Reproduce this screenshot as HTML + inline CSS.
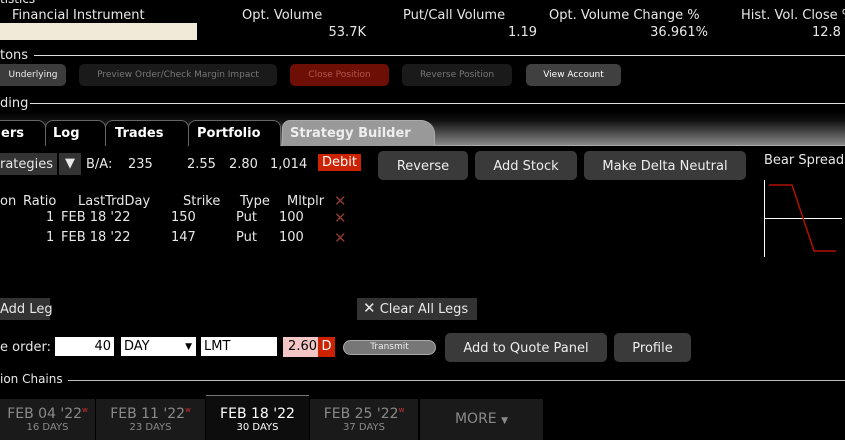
<!DOCTYPE html>
<html><head><meta charset="utf-8"><style>
*{margin:0;padding:0;box-sizing:border-box}
body{width:845px;height:440px;background:#000;color:#e8e8e8;font-family:"DejaVu Sans","Liberation Sans",sans-serif;font-size:13px;position:relative;overflow:hidden}
.a{position:absolute;white-space:nowrap}
.r{text-align:right}
.btn{position:absolute;border-radius:5px;display:flex;align-items:center;justify-content:center;font-size:9px;white-space:nowrap}
.b2{position:absolute;border-radius:5px;background:#3a3a3a;display:flex;align-items:center;justify-content:center;font-size:13px;color:#eee;white-space:nowrap}
.line{position:absolute;height:1px;background:#ddd}
.tab{position:absolute;top:120px;height:26px;background:#000;border:1px solid #666;border-bottom:none;border-radius:8px 8px 0 0;font-weight:bold;font-size:13px;color:#fff;padding:5px 0 0 12px}
.dt{position:absolute;top:399px;height:41px;background:#1a1a1a;text-align:center;color:#8a8a8a}
.dt .t{font-size:14px;margin-top:7px}
.dt .s{font-size:10px;margin-top:0px}
.w{color:#c33;font-size:7px;vertical-align:top}
.x{color:#8a3a30;font-weight:bold;font-size:15px;line-height:15px}
</style></head><body>
<div class="a" style="left:0;top:-8px;font-size:12px">tistics</div>
<div class="a" style="left:12px;top:8px">Financial Instrument</div>
<div class="a" style="left:242px;top:8px">Opt. Volume</div>
<div class="a" style="left:403px;top:8px">Put/Call Volume</div>
<div class="a" style="left:549px;top:8px">Opt. Volume Change %</div>
<div class="a" style="left:741px;top:8px">Hist. Vol. Close %</div>
<div class="a" style="left:0;top:23px;width:197px;height:17px;background:#efebd8"></div>
<div class="a r" style="left:266px;width:100px;top:25px">53.7K</div>
<div class="a r" style="left:437px;width:100px;top:25px">1.19</div>
<div class="a r" style="left:608px;width:100px;top:25px">36.961%</div>
<div class="a" style="left:812px;top:25px">12.8</div>

<div class="a" style="left:0;top:48px">tons</div>
<div class="line" style="left:34px;right:0;top:55px"></div>
<div class="btn" style="left:0;top:64px;width:66px;height:22px;background:#3c3c3c;color:#eee;border-radius:0 5px 5px 0">Underlying</div>
<div class="btn" style="left:79px;top:64px;width:198px;height:22px;background:#1a1a1a;color:#777">Preview Order/Check Margin Impact</div>
<div class="btn" style="left:290px;top:64px;width:99px;height:22px;background:#6e0f05;color:#b0554a">Close Position</div>
<div class="btn" style="left:402px;top:64px;width:110px;height:22px;background:#1a1a1a;color:#777">Reverse Position</div>
<div class="btn" style="left:526px;top:64px;width:95px;height:22px;background:#404040;color:#fff">View Account</div>

<div class="a" style="left:0;top:96px">ding</div>
<div class="line" style="left:30px;right:0;top:103px"></div>
<div class="a" style="left:0;top:112px;width:845px;height:34px;background:linear-gradient(#000 0%,#111 25%,#8c8c8c 100%)"></div>
<div class="line" style="left:0;right:0;top:145px;background:#aaa"></div>
<div class="tab" style="left:-10px;width:56px;padding-left:10px">ers</div>
<div class="tab" style="left:45px;width:61px;padding-left:7px">Log</div>
<div class="tab" style="left:105px;width:84px;padding-left:9px">Trades</div>
<div class="tab" style="left:188px;width:93px;padding-left:8px">Portfolio</div>
<div class="tab" style="left:282px;width:153px;background:#999;border-color:#aaa;color:#eee;padding-left:7px;border-radius:8px 14px 0 0">Strategy Builder</div>

<div class="a" style="left:0;top:153px;width:57px;height:22px;background:#333;padding:4px 0 0 0">rategies</div>
<div class="a" style="left:59px;top:153px;width:22px;height:22px;background:#333;text-align:center;padding-top:3px">▼</div>
<div class="a" style="left:86px;top:157px">B/A:</div>
<div class="a" style="left:128px;top:157px">235</div>
<div class="a" style="left:187px;top:157px">2.55</div>
<div class="a" style="left:229px;top:157px">2.80</div>
<div class="a" style="left:270px;top:157px">1,014</div>
<div class="a" style="left:318px;top:154px;width:43px;height:17px;background:#cc2200;color:#fff;text-align:center;padding-top:1px">Debit</div>
<div class="b2" style="left:378px;top:151px;width:90px;height:29px;padding-top:2px">Reverse</div>
<div class="b2" style="left:475px;top:151px;width:102px;height:29px;padding-top:2px">Add Stock</div>
<div class="b2" style="left:584px;top:151px;width:162px;height:29px;padding-top:2px">Make Delta Neutral</div>
<div class="a" style="left:764px;top:153px">Bear Spread</div>
<svg class="a" style="left:760px;top:175px" width="85" height="90"><line x1="4.5" y1="5" x2="4.5" y2="82" stroke="#fff"/><line x1="4" y1="43.5" x2="82" y2="43.5" stroke="#fff"/><polyline points="9,10 32,10 54,76 76,76" fill="none" stroke="#b01000" stroke-width="1.5"/></svg>

<div class="a" style="left:0;top:194px">on</div>
<div class="a" style="left:23px;top:194px">Ratio</div>
<div class="a" style="left:78px;top:194px">LastTrdDay</div>
<div class="a" style="left:183px;top:194px">Strike</div>
<div class="a" style="left:240px;top:194px">Type</div>
<div class="a" style="left:287px;top:194px">Mltplr</div>
<div class="a x" style="left:334px;top:194px">✕</div>
<div class="a" style="left:46px;top:210px">1</div><div class="a" style="left:61px;top:210px">FEB 18 '22</div><div class="a" style="left:171px;top:210px">150</div><div class="a" style="left:236px;top:210px">Put</div><div class="a" style="left:279px;top:210px">100</div><div class="a x" style="left:334px;top:211px">✕</div>
<div class="a" style="left:46px;top:230px">1</div><div class="a" style="left:61px;top:230px">FEB 18 '22</div><div class="a" style="left:171px;top:230px">147</div><div class="a" style="left:236px;top:230px">Put</div><div class="a" style="left:279px;top:230px">100</div><div class="a x" style="left:334px;top:231px">✕</div>

<div class="a" style="left:0;top:298px;width:50px;height:22px;background:#333;padding-top:4px">Add Leg</div>
<div class="a" style="left:357px;top:298px;width:120px;height:22px;background:#333;padding:4px 0 0 6px"><span style="font-size:15px;line-height:13px">✕</span> Clear All Legs</div>

<div class="a" style="left:0;top:340px">e order:</div>
<div class="a r" style="left:55px;top:337px;width:59px;height:19px;background:#fff;color:#000;padding:2px 3px 0 0">40</div>
<div class="a" style="left:121px;top:337px;width:75px;height:19px;background:#fff;color:#000;padding:2px 0 0 3px">DAY<span style="position:absolute;right:4px;font-size:9px;top:5px">▼</span></div>
<div class="a" style="left:201px;top:337px;width:76px;height:19px;background:#fff;color:#000;padding:2px 0 0 3px">LMT</div>
<div class="a r" style="left:283px;top:337px;width:35px;height:20px;background:#f5c6c6;color:#000;padding:2px 1px 0 0">2.60</div>
<div class="a" style="left:318px;top:337px;width:17px;height:20px;background:#cc2200;color:#fff;text-align:center;padding-top:2px">D</div>
<div class="a" style="left:343px;top:340px;width:93px;height:15px;background:#777;border:1px solid #aaa;border-radius:8px;font-size:9px;color:#eee;text-align:center;line-height:13px">Transmit</div>
<div class="b2" style="left:445px;top:333px;width:162px;height:29px;padding-top:2px">Add to Quote Panel</div>
<div class="b2" style="left:614px;top:333px;width:77px;height:29px;padding-top:2px">Profile</div>

<div class="a" style="left:0;top:372px;font-size:12px">ion Chains</div>
<div class="line" style="left:68px;right:0;top:380px;background:#bbb"></div>
<div class="dt" style="left:0;width:95px"><div class="t">FEB 04 '22<span class="w">w</span></div><div class="s">16 DAYS</div></div>
<div class="dt" style="left:96px;width:109px"><div class="t">FEB 11 '22<span class="w">w</span></div><div class="s">23 DAYS</div></div>
<div class="dt" style="left:206px;width:103px;top:395px;height:45px;background:#0d0d0d;border-top:1px solid #777;color:#fff"><div class="t" style="margin-top:10px">FEB 18 '22</div><div class="s">30 DAYS</div></div>
<div class="dt" style="left:310px;width:108px"><div class="t">FEB 25 '22<span class="w">w</span></div><div class="s">37 DAYS</div></div>
<div class="dt" style="left:420px;width:123px"><div class="t" style="margin-top:12px">MORE <span style="font-size:9px">▼</span></div></div>
</body></html>
